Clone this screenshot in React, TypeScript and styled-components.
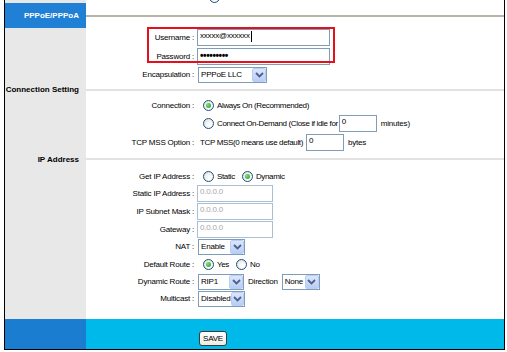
import styled, { createGlobalStyle } from "styled-components";

const GlobalStyle = createGlobalStyle`
  body {
    margin: 0;
    background: #fff;
    font-family: "Liberation Sans", Arial, sans-serif;
    font-size: 8px;
    letter-spacing: -0.2px;
    color: #000;
  }
`;

type Side = "gray" | "blue" | "dark";

const sideColors: Record<Side, string> = {
  gray: "#e8e8e8",
  blue: "#1f80d6",
  dark: "#1b7dcf",
};

function App() {
  return (
    <>
      <GlobalStyle />
      <Frame>
        <Row $h={3}>
          <SideCell $side="gray" />
          <ClipCell>
            <ClipInner>
              <Radio $checked />
              <OptionText>PPPoA/PPPoE</OptionText>
            </ClipInner>
          </ClipCell>
        </Row>

        <Heading side="blue" title="PPPoE/PPPoA" h={25} ruleColor="#b6b4a5" light />

        <FormRow h={19} label="Username">
          <TextBox $w={133}>
            xxxxx@xxxxxx<Caret />
          </TextBox>
        </FormRow>
        <FormRow h={19} label="Password">
          <TextBox $w={133}>
            <Dots>•••••••••</Dots>
          </TextBox>
        </FormRow>
        <FormRow h={17} label="Encapsulation">
          <Select w={69} value="PPPoE LLC" />
        </FormRow>

        <Heading side="gray" title="Connection Setting" h={13} ruleColor="#e2e2e2" />

        <FormRow h={18} label="Connection">
          <Radio $checked />
          <OptionText>Always On (Recommended)</OptionText>
        </FormRow>
        <FormRow h={19} label="">
          <Radio />
          <OptionText>Connect On-Demand (Close if idle for</OptionText>
          <TextBox $w={38}>0</TextBox>
          <Trail>minutes)</Trail>
        </FormRow>
        <FormRow h={18} label="TCP MSS Option">
          <PlainText>TCP MSS(0 means use default)</PlainText>
          <TextBox $w={38}>0</TextBox>
          <Trail>bytes</Trail>
        </FormRow>

        <Heading side="gray" title="IP Address" h={16} ruleColor="#e2e2e2" />

        <FormRow h={18} label="Get IP Address">
          <Radio />
          <OptionText>Static</OptionText>
          <Radio $checked />
          <OptionText>Dynamic</OptionText>
        </FormRow>
        <FormRow h={17} label="Static IP Address">
          <TextBox $w={76} $disabled>0.0.0.0</TextBox>
        </FormRow>
        <FormRow h={18} label="IP Subnet Mask">
          <TextBox $w={76} $disabled>0.0.0.0</TextBox>
        </FormRow>
        <FormRow h={18} label="Gateway">
          <TextBox $w={76} $disabled>0.0.0.0</TextBox>
        </FormRow>
        <FormRow h={17} label="NAT">
          <Select w={47} value="Enable" />
        </FormRow>
        <FormRow h={18} label="Default Route">
          <Radio $checked />
          <OptionText>Yes</OptionText>
          <Radio />
          <OptionText>No</OptionText>
        </FormRow>
        <FormRow h={17} label="Dynamic Route">
          <Select w={46} value="RIP1" />
          <Trail>Direction</Trail>
          <Select w={38} value="None" />
        </FormRow>
        <FormRow h={17} label="Multicast">
          <Select w={47} value="Disabled" />
        </FormRow>

        <Row $h={12}>
          <SideCell $side="gray" />
          <div />
        </Row>

        <Row $h={30}>
          <SideCell $side="dark" />
          <FooterCell>
            <SaveButton>SAVE</SaveButton>
          </FooterCell>
        </Row>

        <Highlight />
      </Frame>
    </>
  );
}

export default App;

function Heading(props: {
  side: Side;
  title: string;
  h: number;
  ruleColor: string;
  light?: boolean;
}) {
  return (
    <Row $h={props.h}>
      <SideCell $side={props.side}>
        <SectionTitle $light={props.light}>{props.title}</SectionTitle>
      </SideCell>
      <RuleCell>
        <Rule $color={props.ruleColor} />
      </RuleCell>
    </Row>
  );
}

function FormRow(props: { h: number; label: string; children: React.ReactNode }) {
  return (
    <Row $h={props.h}>
      <SideCell $side="gray" />
      <FieldLine>
        <FieldLabel>{props.label ? `${props.label} :` : ""}</FieldLabel>
        <Fields>{props.children}</Fields>
      </FieldLine>
    </Row>
  );
}

function Select(props: { w: number; value: string }) {
  return (
    <SelectBox $w={props.w}>
      <SelectValue>{props.value}</SelectValue>
      <DropButton>
        <svg width="9" height="6" viewBox="0 0 9 6">
          <path d="M1 1 L4.5 4.5 L8 1" fill="none" stroke="#4d6185" strokeWidth="1.8" />
        </svg>
      </DropButton>
    </SelectBox>
  );
}

const Frame = styled.div`
  position: relative;
  margin-left: 4px;
  width: 501px;
  box-sizing: border-box;
  border-left: 1px solid #000;
  border-right: 1px solid #000;
  border-bottom: 1px solid #000;
`;

const Row = styled.div<{ $h: number }>`
  display: grid;
  grid-template-columns: 81px 1fr;
  height: ${(p) => p.$h}px;
`;

const SideCell = styled.div<{ $side: Side }>`
  background: ${(p) => sideColors[p.$side]};
  display: flex;
  align-items: center;
  justify-content: flex-end;
  padding-right: 7px;
`;

const SectionTitle = styled.span<{ $light?: boolean }>`
  font-weight: bold;
  font-size: 8px;
  letter-spacing: 0;
  white-space: nowrap;
  color: ${(p) => (p.$light ? "#fff" : "#000")};
`;

const RuleCell = styled.div`
  display: flex;
  align-items: center;
`;

const Rule = styled.div<{ $color: string }>`
  flex: 1;
  height: 2px;
  background: ${(p) => p.$color};
`;

const ClipCell = styled.div`
  overflow: hidden;
  padding-left: 117px;
`;

const ClipInner = styled.div`
  display: flex;
  align-items: center;
  margin-top: -8px;
  color: #999;
`;

const FieldLine = styled.div`
  display: flex;
  align-items: center;
`;

const FieldLabel = styled.div`
  width: 108px;
  padding-right: 3px;
  text-align: right;
  white-space: nowrap;
`;

const Fields = styled.div`
  display: flex;
  align-items: center;
  white-space: nowrap;
`;

const TextBox = styled.div<{ $w: number; $disabled?: boolean }>`
  box-sizing: border-box;
  width: ${(p) => p.$w}px;
  height: 17px;
  border: 1px solid ${(p) => (p.$disabled ? "#a9bfd6" : "#7f9db9")};
  background: #fff;
  padding: 1px 2px;
  display: flex;
  align-items: flex-start;
  color: ${(p) => (p.$disabled ? "#a8a8a8" : "#000")};
  overflow: hidden;
`;

const Caret = styled.span`
  display: inline-block;
  width: 1px;
  height: 11px;
  background: #000;
  margin-left: 1px;
`;

const Dots = styled.span`
  font-size: 10px;
  font-weight: bold;
  letter-spacing: -0.4px;
  line-height: 12px;
`;

const Radio = styled.span<{ $checked?: boolean }>`
  box-sizing: border-box;
  display: inline-flex;
  align-items: center;
  justify-content: center;
  width: 11px;
  height: 11px;
  margin: 0 3px 0 6px;
  border-radius: 50%;
  border: 1px solid #1c5180;
  background: radial-gradient(circle at 65% 65%, #fff 20%, #dcdcd5 90%);
  &::after {
    content: "";
    display: ${(p) => (p.$checked ? "block" : "none")};
    width: 5px;
    height: 5px;
    border-radius: 50%;
    background: radial-gradient(circle at 35% 35%, #7ee07e, #1e9a1e);
  }
`;

const OptionText = styled.span`
  margin-right: 1px;
  letter-spacing: -0.35px;
`;

const PlainText = styled.span`
  margin-left: 3px;
  margin-right: 3px;
  letter-spacing: -0.35px;
`;

const Trail = styled.span`
  margin: 0 3px 0 4px;
`;

const SelectBox = styled.div<{ $w: number }>`
  box-sizing: border-box;
  width: ${(p) => p.$w}px;
  height: 16px;
  margin-left: 1px;
  border: 1px solid #7f9db9;
  background: #fff;
  display: flex;
  align-items: center;
  justify-content: space-between;
`;

const SelectValue = styled.span`
  padding-left: 2px;
`;

const DropButton = styled.span`
  box-sizing: border-box;
  width: 14px;
  height: 14px;
  display: flex;
  align-items: center;
  justify-content: center;
  border: 1px solid #b9cdf5;
  border-radius: 2px;
  background: linear-gradient(#dbe6fd, #b8cdf7);
`;

const FooterCell = styled.div`
  background: #00b9eb;
  display: flex;
  align-items: center;
  padding-left: 113px;
  padding-top: 8px;
`;

const SaveButton = styled.button`
  height: 15px;
  width: 28px;
  padding: 0;
  font-family: "Liberation Sans", Arial, sans-serif;
  font-size: 8px;
  letter-spacing: -0.2px;
  color: #000;
  border: 1px solid #3c3c3c;
  border-radius: 3px;
  background: linear-gradient(#ffffff, #ecebe6);
`;

const Highlight = styled.div`
  position: absolute;
  left: 142px;
  top: 27px;
  width: 188px;
  height: 36px;
  box-sizing: border-box;
  border: 2px solid #e5101c;
  pointer-events: none;
`;
